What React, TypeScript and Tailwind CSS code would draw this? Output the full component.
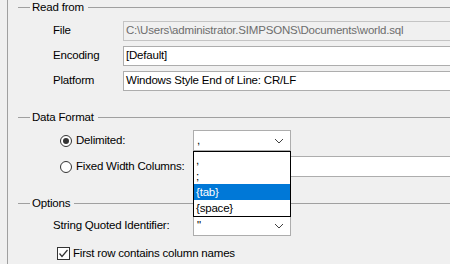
import React from "react";

const font = { fontFamily: '"Liberation Sans", Arial, sans-serif' };

function GroupHeader({ title }: { title: string }) {
  return (
    <div className="flex items-center h-[14px] pl-[10px]">
      <div className="w-[12px] h-px bg-[#a0a0a0]" />
      <span className="px-[2px] leading-[14px]">{title}</span>
      <div className="flex-1 h-px bg-[#a0a0a0] ml-[2px]" />
    </div>
  );
}

function Chevron() {
  return (
    <svg width="10" height="6" viewBox="0 0 10 6" className="absolute right-[6px] top-1/2 -translate-y-1/2">
      <path d="M1 1 L5 5 L9 1" fill="none" stroke="#404040" strokeWidth="1" />
    </svg>
  );
}

function TextRow({ label, value, disabled }: { label: string; value: string; disabled?: boolean }) {
  return (
    <div className="flex items-center pl-[45px] h-[20px]">
      <span className="w-[70px] shrink-0">{label}</span>
      <div
        className={
          "h-[20px] w-[340px] shrink-0 border flex items-center px-[2px] whitespace-nowrap " +
          (disabled ? "bg-[#f0f0f0] border-[#c4c4c4] text-[#6d6d6d]" : "bg-white border-[#adadad] text-black")
        }
      >
        {value}
      </div>
    </div>
  );
}

export default function App() {
  const items = [",", ";", "{tab}", "{space}"];
  return (
    <div
      className="relative w-[450px] h-[264px] overflow-hidden bg-[#f0f0f0] text-[11.5px] tracking-[-0.2px] text-black flex"
      style={font}
    >
      <div className="w-[7px] shrink-0" />
      <div className="flex-1 border-l border-[#a0a0a0] flex flex-col">
        <GroupHeader title="Read from" />
        <div className="mt-[7px] flex flex-col gap-[5px]">
          <TextRow label="File" value="C:\Users\administrator.SIMPSONS\Documents\world.sql" disabled />
          <TextRow label="Encoding" value="[Default]" />
          <TextRow label="Platform" value="Windows Style End of Line: CR/LF" />
        </div>

        <div className="mt-[19px]">
          <GroupHeader title="Data Format" />
        </div>
        <div className="mt-[6px] flex items-center pl-[52px] h-[21px]">
          <div className="w-[133px] shrink-0 flex items-center gap-[4px] whitespace-nowrap">
            <span className="w-[12px] h-[12px] rounded-full border border-[#333] flex items-center justify-center bg-white">
              <span className="w-[6px] h-[6px] rounded-full bg-[#333]" />
            </span>
            <span>Delimited:</span>
          </div>
          <div className="relative w-[98px] h-[21px] border border-[#adadad] bg-white flex items-center px-[3px]">
            ,
            <Chevron />
          </div>
        </div>
        <div className="mt-[5px] flex items-center pl-[52px] h-[21px]">
          <div className="w-[133px] shrink-0 flex items-center gap-[4px] whitespace-nowrap">
            <span className="w-[12px] h-[12px] rounded-full border border-[#333] bg-white" />
            <span>Fixed Width Columns:</span>
          </div>
          <div className="w-[300px] shrink-0 h-[21px] border border-[#adadad] bg-white" />
        </div>

        <div className="mt-[19px]">
          <GroupHeader title="Options" />
        </div>
        <div className="mt-[6px] flex items-center pl-[45px] h-[20px]">
          <span className="w-[140px] shrink-0 whitespace-nowrap">String Quoted Identifier:</span>
          <div className="relative w-[98px] h-[20px] border border-[#adadad] bg-white flex items-center px-[3px]">
            "
            <Chevron />
          </div>
        </div>
        <div className="mt-[11px] flex items-center pl-[49px] gap-[3px] h-[13px]">
          <span className="w-[13px] h-[13px] shrink-0 border border-[#333] bg-white flex items-center justify-center">
            <svg width="11" height="11" viewBox="0 0 11 11">
              <path d="M1.5 5.5 L4 8.5 L9.5 2" fill="none" stroke="#333" strokeWidth="1.2" />
            </svg>
          </span>
          <span className="whitespace-nowrap">First row contains column names</span>
        </div>
      </div>

      <div className="absolute left-[193px] top-[151px] w-[98px] border border-black bg-white flex flex-col">
        {items.map((it) => (
          <div
            key={it}
            className={"h-[16px] leading-[16px] px-[2px] " + (it === "{tab}" ? "bg-[#0078d7] text-white" : "")}
          >
            {it}
          </div>
        ))}
      </div>
    </div>
  );
}
